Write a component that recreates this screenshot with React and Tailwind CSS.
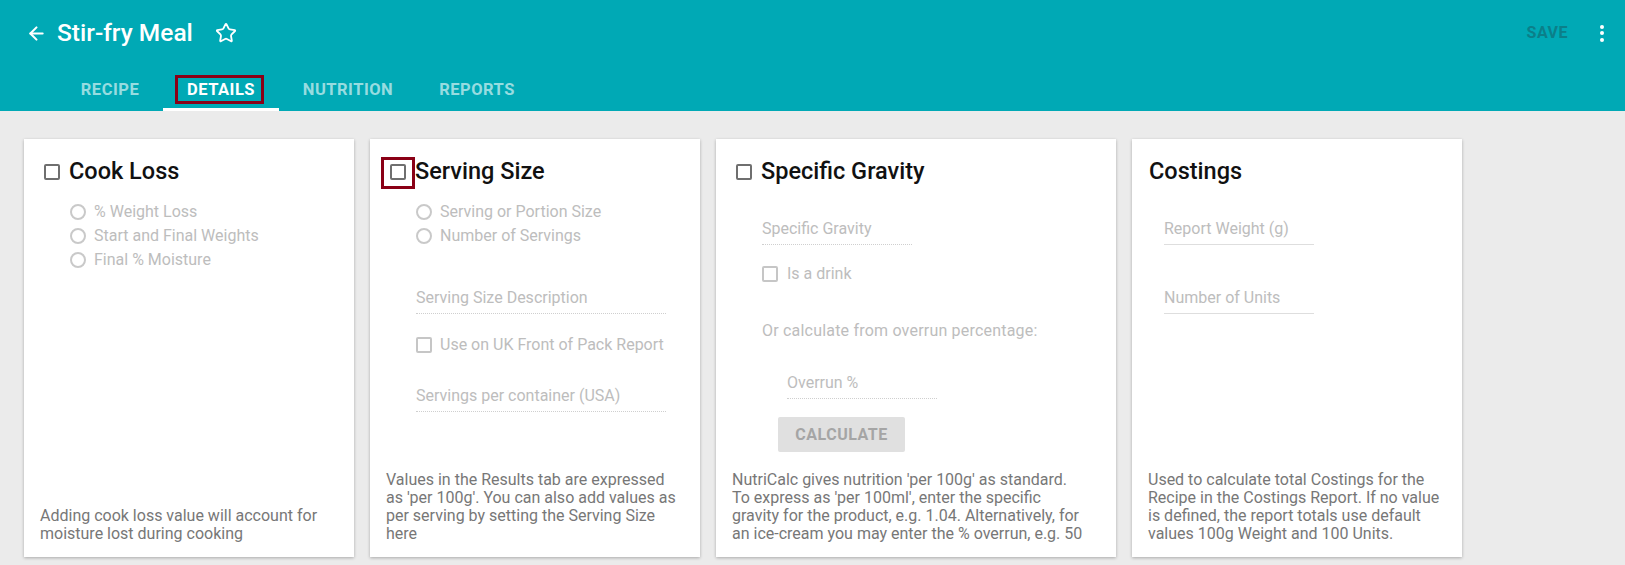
import { ArrowLeft, Star } from "lucide-react";

function Box({ dark }) {
  return (
    <span
      className={`block h-[16px] w-[16px] shrink-0 rounded-[2px] border-2 ${
        dark ? "border-[#6f6f6f]" : "border-[#c6c6c6]"
      }`}
    />
  );
}

function Radio({ label }) {
  return (
    <div className="flex h-[24px] items-center gap-2">
      <span className="block h-[16px] w-[16px] rounded-full border-2 border-[#c9c9c9]" />
      <span className="text-[16px] text-[#bdbdbd]">{label}</span>
    </div>
  );
}

function Field({ label, width = "w-[150px]", dotted, className = "" }) {
  return (
    <div
      className={`h-[28px] border-b ${
        dotted ? "border-dotted border-[#cfcfcf]" : "border-[#dedede]"
      } ${width} ${className}`}
    >
      <div className="text-[16px] leading-[24px] text-[#bdbdbd]">{label}</div>
    </div>
  );
}

function CardTitle({ children, check, outlined }) {
  return (
    <div className={`mt-[17px] flex h-[32px] items-center ${check ? "pl-5" : "pl-[17px]"}`}>
      {check && (
        <span className="relative mr-[9px]">
          <Box dark />
          {outlined && (
            <span className="absolute -left-[9px] -top-[7px] h-[32px] w-[34px] border-[3px] border-[#8a0016]" />
          )}
        </span>
      )}
      <h2 className="text-[23.5px] font-medium text-[#111]">{children}</h2>
    </div>
  );
}

function Footer({ lines }) {
  return (
    <p className="mt-auto px-4 pb-[14px] text-[16px] leading-[18px] text-[#777]">
      {lines.map((l, i) => (
        <span key={i} className="block whitespace-nowrap">
          {l}
        </span>
      ))}
    </p>
  );
}

function Card({ width = "w-[330px]", children }) {
  return (
    <section
      className={`flex h-[418px] ${width} shrink-0 flex-col bg-white shadow-[0_1px_3px_rgba(0,0,0,0.28)]`}
    >
      {children}
    </section>
  );
}

const tabs = [
  { name: "RECIPE", w: "w-[106px]" },
  { name: "DETAILS", w: "w-[116px]", active: true },
  { name: "NUTRITION", w: "w-[138px]" },
  { name: "REPORTS", w: "w-[120px]" },
];

export default function App() {
  return (
    <div
      className="h-[565px] w-[1625px] overflow-hidden bg-[#ebebeb]"
      style={{ fontFamily: "Roboto, 'Noto Sans', sans-serif" }}
    >
      <header className="flex h-[111px] flex-col bg-[#00a9b5]">
        <div className="flex h-[66px] items-center pl-[26px] pr-[18px]">
          <ArrowLeft className="h-[21px] w-[21px] text-white" strokeWidth={2.4} />
          <h1 className="ml-[10px] text-[24.5px] font-medium text-white">Stir-fry Meal</h1>
          <Star className="ml-[22px] h-[22px] w-[22px] text-white" strokeWidth={2} />
          <div className="ml-auto flex items-center">
            <span className="text-[16px] font-bold tracking-[0.5px] text-[#0b7f89]">SAVE</span>
            <div className="ml-[29px] flex w-[10px] flex-col items-center gap-[2.5px]">
              <span className="block h-[4px] w-[4px] rounded-full bg-white" />
              <span className="block h-[4px] w-[4px] rounded-full bg-white" />
              <span className="block h-[4px] w-[4px] rounded-full bg-white" />
            </div>
          </div>
        </div>
        <nav className="flex h-[45px] pl-[57px]">
          {tabs.map((t) => (
            <div
              key={t.name}
              className={`relative flex ${t.w} items-center justify-center border-b-[3px] pt-[6px] text-[16.5px] font-bold tracking-[0.5px] ${
                t.active ? "border-white text-white" : "border-transparent text-white/60"
              }`}
            >
              {t.name}
              {t.active && (
                <span className="absolute left-[12px] top-[9px] h-[29px] w-[89px] border-[3px] border-[#8a0016]" />
              )}
            </div>
          ))}
        </nav>
      </header>

      <main className="flex gap-4 px-6 pt-[28px]">
        <Card>
          <CardTitle check>Cook Loss</CardTitle>
          <div className="mt-[12px] pl-[46px]">
            <Radio label="% Weight Loss" />
            <Radio label="Start and Final Weights" />
            <Radio label="Final % Moisture" />
          </div>
          <Footer lines={["Adding cook loss value will account for", "moisture lost during cooking"]} />
        </Card>

        <Card>
          <CardTitle check outlined>
            Serving Size
          </CardTitle>
          <div className="mt-[12px] pl-[46px]">
            <Radio label="Serving or Portion Size" />
            <Radio label="Number of Servings" />
            <Field label="Serving Size Description" width="w-[250px]" dotted className="mt-[38px]" />
            <div className="mt-[19px] flex h-[24px] items-center gap-2">
              <Box />
              <span className="text-[16px] text-[#bdbdbd]">Use on UK Front of Pack Report</span>
            </div>
            <Field label="Servings per container (USA)" width="w-[250px]" dotted className="mt-[27px]" />
          </div>
          <Footer
            lines={[
              "Values in the Results tab are expressed",
              "as 'per 100g'. You can also add values as",
              "per serving by setting the Serving Size",
              "here",
            ]}
          />
        </Card>

        <Card width="w-[400px]">
          <CardTitle check>Specific Gravity</CardTitle>
          <div className="pl-[46px]">
            <Field label="Specific Gravity" dotted className="mt-[29px]" />
            <div className="mt-[17px] flex h-[24px] items-center gap-[9px]">
              <Box />
              <span className="text-[16px] text-[#bdbdbd]">Is a drink</span>
            </div>
            <div className="mt-[33px] text-[16px] leading-[24px] tracking-[0.2px] text-[#bdbdbd]">
              Or calculate from overrun percentage:
            </div>
            <Field label="Overrun %" dotted className="ml-[25px] mt-[28px]" />
            <button className="ml-[16px] mt-[18px] h-[35px] w-[127px] rounded-[2px] bg-[#e0e0e0] text-[16px] font-bold tracking-[0.5px] text-[#a5a5a5]">
              CALCULATE
            </button>
          </div>
          <Footer
            lines={[
              "NutriCalc gives nutrition 'per 100g' as standard.",
              "To express as 'per 100ml', enter the specific",
              "gravity for the product, e.g. 1.04. Alternatively, for",
              "an ice-cream you may enter the % overrun, e.g. 50",
            ]}
          />
        </Card>

        <Card>
          <CardTitle>Costings</CardTitle>
          <div className="pl-[32px]">
            <Field label="Report Weight (g)" className="mt-[29px]" />
            <Field label="Number of Units" className="mt-[41px]" />
          </div>
          <Footer
            lines={[
              "Used to calculate total Costings for the",
              "Recipe in the Costings Report. If no value",
              "is defined, the report totals use default",
              "values 100g Weight and 100 Units.",
            ]}
          />
        </Card>
      </main>
    </div>
  );
}
